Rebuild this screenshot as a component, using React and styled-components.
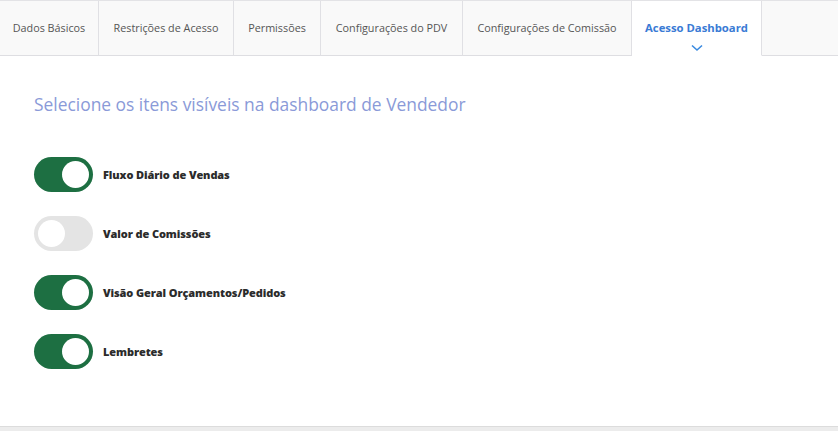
import React, { useState } from "react";
import styled, { createGlobalStyle } from "styled-components";

const GlobalStyle = createGlobalStyle`
  html, body {
    margin: 0;
    padding: 0;
    background: #ffffff;
    font-family: "Open Sans", "Liberation Sans", sans-serif;
  }
`;

const tabs = [
  { label: "Dados Básicos", width: 99 },
  { label: "Restrições de Acesso", width: 135 },
  { label: "Permissões", width: 87 },
  { label: "Configurações do PDV", width: 142 },
  { label: "Configurações de Comissão", width: 169 },
  { label: "Acesso Dashboard", width: 130, active: true },
];

const itens = [
  { label: "Fluxo Diário de Vendas", on: true },
  { label: "Valor de Comissões", on: false },
  { label: "Visão Geral Orçamentos/Pedidos", on: true },
  { label: "Lembretes", on: true },
];

export default function App() {
  const [valores, setValores] = useState(itens.map((i) => i.on));

  const alternar = (idx) =>
    setValores((v) => v.map((x, i) => (i === idx ? !x : x)));

  return (
    <Pagina>
      <GlobalStyle />
      <BarraAbas>
        {tabs.map((t) => (
          <Aba key={t.label} $ativa={t.active} $largura={t.width}>
            {t.label}
            {t.active && (
              <Seta viewBox="0 0 12 8">
                <path d="M1 1.5 L6 6 L11 1.5" />
              </Seta>
            )}
          </Aba>
        ))}
        <Resto />
      </BarraAbas>
      <Conteudo>
        <Titulo>Selecione os itens visíveis na dashboard de Vendedor</Titulo>
        <Lista>
          {itens.map((item, idx) => (
            <Linha key={item.label} onClick={() => alternar(idx)}>
              <Chave $ligada={valores[idx]}>
                <Botao $ligada={valores[idx]} />
              </Chave>
              <Rotulo>{item.label}</Rotulo>
            </Linha>
          ))}
        </Lista>
      </Conteudo>
      <Rodape />
    </Pagina>
  );
}

const Pagina = styled.div`
  width: 838px;
  height: 431px;
  display: flex;
  flex-direction: column;
  overflow: hidden;
`;

const BarraAbas = styled.nav`
  display: flex;
  height: 56px;
  box-sizing: border-box;
  border-top: 1px solid #e3e3e6;
`;

const Aba = styled.div`
  position: relative;
  width: ${(p) => p.$largura}px;
  flex-shrink: 0;
  box-sizing: border-box;
  display: flex;
  align-items: center;
  justify-content: center;
  font-size: ${(p) => (p.$ativa ? "11.3px" : "10.8px")};
  color: ${(p) => (p.$ativa ? "#3a7bd5" : "#555555")};
  font-weight: ${(p) => (p.$ativa ? 700 : 400)};
  background: ${(p) => (p.$ativa ? "#ffffff" : "#f9f9f9")};
  border-right: 1px solid #e0e0e4;
  border-bottom: ${(p) => (p.$ativa ? "1px solid transparent" : "1px solid #dedee2")};
  padding-bottom: 2px;
`;

const Seta = styled.svg`
  position: absolute;
  left: 50%;
  bottom: 3px;
  width: 12px;
  height: 8px;
  margin-left: -6px;
  fill: none;
  stroke: #3a8ae0;
  stroke-width: 1.6;
`;

const Resto = styled.div`
  flex: 1;
  background: #f9f9f9;
  border-bottom: 1px solid #dedee2;
`;

const Conteudo = styled.main`
  flex: 1;
  padding: 36px 34px 0;
`;

const Titulo = styled.h2`
  margin: 0;
  font-size: 17.4px;
  font-weight: 400;
  color: #8a9ad8;
  line-height: 24px;
`;

const Lista = styled.div`
  display: flex;
  flex-direction: column;
  gap: 24px;
  margin-top: 41px;
`;

const Linha = styled.div`
  display: flex;
  align-items: center;
  gap: 10px;
  cursor: pointer;
`;

const Chave = styled.div`
  width: 59px;
  height: 35px;
  border-radius: 18px;
  background: ${(p) => (p.$ligada ? "#1d6f42" : "#e4e4e4")};
  display: flex;
  align-items: center;
  justify-content: ${(p) => (p.$ligada ? "flex-end" : "flex-start")};
  padding: 0 4px;
  box-sizing: border-box;
`;

const Botao = styled.span`
  width: 27px;
  height: 27px;
  border-radius: 50%;
  background: #ffffff;
`;

const Rotulo = styled.span`
  font-size: 11px;
  font-weight: 800;
  color: #2b2b2b;
  letter-spacing: -0.1px;
`;

const Rodape = styled.footer`
  height: 4px;
  background: #ececec;
  border-top: 1px solid #dcdcdc;
`;
